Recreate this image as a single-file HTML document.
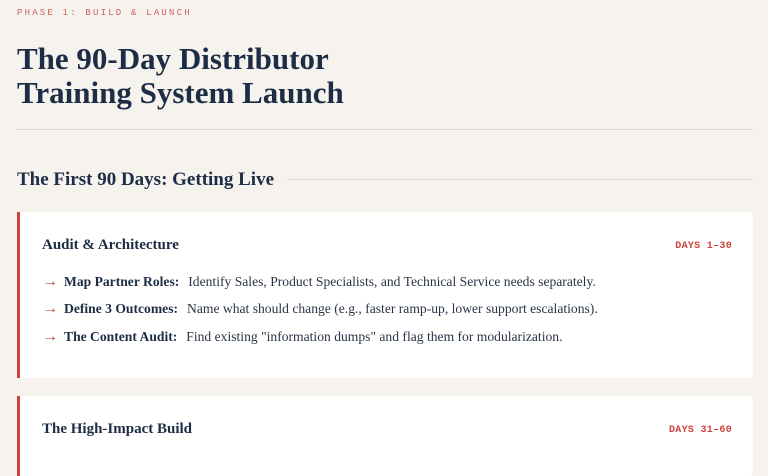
<!DOCTYPE html>
<html><head><style>
*{margin:0;padding:0;box-sizing:border-box}
body{width:768px;height:443px;overflow:hidden;background:#f6f3ef;font-family:"Liberation Serif",serif;color:#1f2d42}
.lab{position:absolute;left:17px;top:8px;font:9px "Liberation Mono",monospace;letter-spacing:2.2px;color:#d0605a}
h1{position:absolute;left:17px;top:42px;font:bold 31px/34px "Liberation Serif",serif;color:#1c2d45}
.hr{position:absolute;left:17px;right:15px;top:129px;border-top:1px solid #d9d4ce}
h2{position:absolute;left:17px;top:169px;font:bold 19px "Liberation Serif",serif;color:#1c2d45}
.h2l{position:absolute;left:287px;right:15px;top:179px;border-top:1px solid #d9d4ce}
.card{position:absolute;left:17px;width:736px;background:#fff;border-left:3px solid #c9443c;border-radius:0 3px 3px 0}
.ct{position:absolute;left:22px;font:bold 15px "Liberation Serif",serif;color:#1c2d45}
.d{position:absolute;right:21px;font:bold 10px "Liberation Mono",monospace;color:#c9443c;letter-spacing:.3px}
.li{position:absolute;left:22px;font-size:13.6px;color:#2a3447;white-space:nowrap}
.li i{font-style:normal;color:#c9443c;display:inline-block;width:22px;font-size:16px;line-height:10px}
.li b{margin-right:9px;color:#1c2d45}
</style></head><body>
<div class="lab">PHASE 1: BUILD &amp; LAUNCH</div>
<h1>The 90-Day Distributor<br>Training System Launch</h1>
<div class="hr"></div>
<h2>The First 90 Days: Getting Live</h2>
<div class="h2l"></div>
<div class="card" style="top:212px;height:166px">
<div class="ct" style="top:25px">Audit &amp; Architecture</div>
<div class="d" style="top:29px">DAYS 1–30</div>
<div class="li" style="top:62px"><i>→</i><b>Map Partner Roles:</b>Identify Sales, Product Specialists, and Technical Service needs separately.</div>
<div class="li" style="top:89px"><i>→</i><b>Define 3 Outcomes:</b>Name what should change (e.g., faster ramp-up, lower support escalations).</div>
<div class="li" style="top:117px"><i>→</i><b>The Content Audit:</b>Find existing "information dumps" and flag them for modularization.</div>
</div>
<div class="card" style="top:396px;height:80px">
<div class="ct" style="top:25px">The High-Impact Build</div>
<div class="d" style="top:29px">DAYS 31–60</div>
</div>
</body></html>
